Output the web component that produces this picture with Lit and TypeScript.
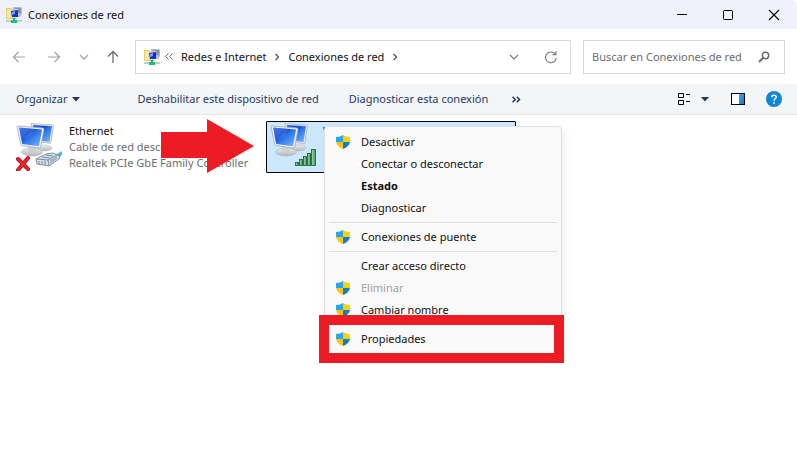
import { LitElement, html, svg, css, nothing } from "lit";
import { customElement } from "lit/decorators.js";
import { classMap } from "lit/directives/class-map.js";

interface MenuEntry {
  label: string;
  shield?: boolean;
  bold?: boolean;
  disabled?: boolean;
  marked?: boolean;
}

const MENU: MenuEntry[][] = [
  [
    { label: "Desactivar", shield: true },
    { label: "Conectar o desconectar" },
    { label: "Estado", bold: true },
    { label: "Diagnosticar" },
  ],
  [{ label: "Conexiones de puente", shield: true }],
  [
    { label: "Crear acceso directo" },
    { label: "Eliminar", shield: true, disabled: true },
    { label: "Cambiar nombre", shield: true },
  ],
  [{ label: "Propiedades", shield: true, marked: true }],
];

const networkFolder = html`<svg width="16" height="16" viewBox="0 0 16 16" aria-hidden="true">
  <path d="M0 1h5l1 1h3v10H0z" fill="#e9cf62" />
  <path d="M1 2h4v9H1z" fill="#fbeb9c" />
  <path d="M7 0h8l1 1v6l-2 3H7z" fill="#b3bac6" />
  <path d="M9 1h6v5H9z" fill="#8793b4" />
  <path d="M4 3l8-1v8l-7 1z" fill="#d5dae4" />
  <path d="M5 4l7-1v7l-6 0z" fill="#1a2fc0" />
  <path d="M6 5l3-1v3l-3 1z" fill="#6fa0f4" />
  <path d="M6 11h5l-1 1H7z" fill="#98a0a8" />
  <path d="M0 13h16v2H0z" fill="#c3caca" />
  <path d="M7 11h2v2h2v3H5v-3h2z" fill="#18c274" />
</svg>`;

const shieldIcon = html`<svg width="14" height="14" viewBox="0 0 14 14" aria-hidden="true">
  <path d="M7 0Q4.500 2 0 2V7H7z" fill="#29a5ea" />
  <path d="M7 0Q9.500 2 14 2V7H7z" fill="#fdd000" />
  <path d="M0 7H7V14Q.8 11.500 0 7z" fill="#f9c412" />
  <path d="M14 7H7V14Q13.200 11.500 14 7z" fill="#117bd0" />
</svg>`;

const computers = svg`
  <defs>
    <linearGradient id="scr" x1="0" y1="0" x2="1" y2="1">
      <stop offset="0" stop-color="#2a6be8" />
      <stop offset=".35" stop-color="#1148d2" />
      <stop offset=".5" stop-color="#2a73ea" />
      <stop offset="1" stop-color="#7dbcfb" />
    </linearGradient>
    <linearGradient id="base" x1="0" y1="0" x2="0" y2="1">
      <stop offset="0" stop-color="#eceeef" />
      <stop offset="1" stop-color="#b2b6ba" />
    </linearGradient>
  </defs>
  <ellipse cx="28" cy="24" rx="7" ry="3" fill="url(#base)" stroke="#b0b4b8" stroke-width=".4" />
  <path d="M14-.5L35.500 1q1 .2 1 1L34 18.500q-.3 1-1 1L18 17z" fill="#e6e8ea" stroke="#a9adb2" stroke-width=".7" />
  <path d="M16 1l19 1.300-2.500 15.700L18 16z" fill="url(#scr)" />
  <ellipse cx="15" cy="28" rx="10.500" ry="4" fill="url(#base)" stroke="#a8acb0" stroke-width=".5" />
  <path d="M11 22l8 1v5q-4 2-8-1z" fill="#cdd0d3" />
  <path d="M1 2l25 2q1.200.2 1 1.200L23.800 23q-.3 1.200-1.500 1L5 21.500q-1-.2-1.200-1.200L0 3q0-1 1-1z" fill="#f1f2f3" stroke="#a4a8ad" stroke-width=".8" />
  <path d="M2 3.600l23 1.900L22 22.300 5.200 19.900z" fill="url(#scr)" />
  <path d="M2 3.600l15 1.300Q15 14 4.300 15.600z" fill="#fff" opacity=".12" />`;

const ethernetIcon = html`<svg width="48" height="48" viewBox="0 0 48 48" aria-hidden="true">
  <g transform="translate(1 1)">${computers}</g>
  <path d="M36 34l10-6v4l-7 5z" fill="#49b9df" />
  <path d="M20 36l10-5 7-1 7 3-1 3-10 7-12-2z" fill="#d7dfe7" stroke="#68788a" stroke-width=".8" />
  <path d="M20 36l12 1 9-5M32 37l1 6M23 38v3M26 38v3M29 38v4M26 34l8 1M30 32l7 1" fill="none" stroke="#73859a" stroke-width=".9" />
  <path d="M34 37l7-4v3l-7 5z" fill="#9eb5ce" />
  <path d="M2 36l10 10M12 35L2 47" stroke="#9e1015" stroke-width="4" stroke-linecap="round" />
  <path d="M2 36l10 10M12 35L2 47" stroke="#e9252b" stroke-width="2.600" stroke-linecap="round" />
</svg>`;

const wifiIcon = html`<svg width="48" height="48" viewBox="0 0 48 48" aria-hidden="true">
  <defs>
    <linearGradient id="bar" x1="0" y1="0" x2="1" y2="0">
      <stop offset="0" stop-color="#a9dab0" />
      <stop offset="1" stop-color="#3c965c" />
    </linearGradient>
  </defs>
  <g transform="translate(1 1)">${computers}</g>
  <g fill="url(#bar)" stroke="#1d6b3c" stroke-width=".9">
    <rect x="25.500" y="39.500" width="3" height="3" />
    <rect x="29.500" y="36.500" width="3" height="6" />
    <rect x="33.500" y="33.500" width="3" height="9" />
    <rect x="37.500" y="30.500" width="3" height="12" />
    <rect x="41.500" y="26.500" width="4" height="16" />
  </g>
</svg>`;

const caret = html`<svg width="8" height="5" viewBox="0 0 8 5" aria-hidden="true">
  <path d="M0 0h8L4 4.600z" fill="#1d3a66" />
</svg>`;

const chevronRight = html`<svg width="6" height="8" viewBox="0 0 6 8" aria-hidden="true">
  <path d="M1.500 1l3 3-3 3" fill="none" stroke="#555" stroke-width="1.300" />
</svg>`;

@customElement("app-root")
export class AppRoot extends LitElement {
  static styles = css`
    :host {
      display: flex;
      flex-direction: column;
      min-height: 100vh;
      background: #fff;
      color: #111;
      font: 11px/16px "Noto Sans", "Open Sans", sans-serif;
    }
    * {
      box-sizing: border-box;
    }
    button {
      font: inherit;
      color: inherit;
      background: none;
      border: 0;
      padding: 0;
      margin: 0;
      display: flex;
      align-items: center;
      white-space: nowrap;
    }
    svg {
      display: block;
      flex: none;
    }
    .titlebar {
      display: flex;
      align-items: center;
      height: 29px;
      padding-left: 6px;
      background: #eff2fa;
      border-top-right-radius: 6px;
    }
    .titlebar h1 {
      flex: 1;
      margin: 0 0 0 6px;
      font: inherit;
    }
    .titlebar button {
      width: 46px;
      height: 28px;
      justify-content: center;
    }
    .navrow {
      display: flex;
      align-items: center;
      height: 55px;
      padding: 0 12px;
    }
    .history {
      display: flex;
      width: 123px;
    }
    .history button {
      width: 14px;
      height: 16px;
      justify-content: center;
    }
    .history button + button {
      margin-left: 21px;
    }
    .history button + .recent {
      margin-left: 16px;
    }
    .history button + .up {
      margin-left: 15px;
    }
    .address {
      flex: 1;
      display: flex;
      align-items: center;
      height: 34px;
      padding: 0 12px 0 8px;
      border: 1px solid #d9d9d9;
    }
    .crumbs {
      flex: 1;
      display: flex;
      align-items: center;
      margin-left: 5px;
    }
    .crumbs a {
      color: inherit;
      text-decoration: none;
      white-space: nowrap;
      margin: 0 8px;
    }
    .address button + button {
      margin-left: 25px;
    }
    .search {
      display: flex;
      align-items: center;
      width: 202px;
      height: 34px;
      margin-left: 12px;
      padding: 0 14px 0 8px;
      border: 1px solid #d9d9d9;
    }
    .search input {
      flex: 1;
      min-width: 0;
      padding: 0;
      border: 0;
      outline: 0;
      background: none;
      font: inherit;
    }
    .search input::placeholder {
      color: #6b6b6b;
      opacity: 1;
    }
    .toolbar {
      display: flex;
      align-items: center;
      height: 31px;
      padding: 0 15px 0 16px;
      background: #f4f5f7;
      border-bottom: 1px solid #e5e7e9;
      color: #1d3a66;
    }
    .organize {
      gap: 5px;
      margin-right: 57px;
    }
    .disable {
      margin-right: 30px;
    }
    .diagnose {
      margin-right: 24px;
    }
    .tools {
      display: flex;
      align-items: center;
      margin-left: auto;
    }
    .view {
      gap: 10px;
      margin-right: 22px;
    }
    .pane {
      margin-right: 21px;
    }
    .content {
      position: relative;
      flex: 1;
      padding: 6px 12px;
    }
    .tiles {
      display: grid;
      grid-template-columns: repeat(auto-fill, 250px);
      gap: 4px;
    }
    .tile {
      display: flex;
      gap: 5px;
      height: 52px;
      padding: 1px 3px;
      border: 1px solid transparent;
      color: #6d6d6d;
      white-space: nowrap;
    }
    .tile p {
      margin: 0;
    }
    .tile .name {
      color: #111;
    }
    .tile.selected {
      background: #cce8ff;
      border-color: #000;
      border-radius: 1px;
    }
    .pointer {
      position: absolute;
      left: 161px;
      top: 4px;
    }
    .menu {
      position: absolute;
      left: 324px;
      top: 11px;
      width: 238px;
      padding: 4px 0;
      background: #f9f9f9;
      border: 1px solid #e0e0e0;
      border-radius: 4px;
      box-shadow: 2px 4px 10px rgba(0, 0, 0, 0.08);
    }
    .menu hr {
      height: 1px;
      margin: 3px 4px;
      border: 0;
      background: #e0e0e0;
    }
    .item {
      position: relative;
      width: 100%;
      height: 22px;
      padding-left: 11px;
    }
    .glyph {
      width: 25px;
    }
    .bold {
      font-weight: 700;
    }
    .item:disabled {
      color: #a0a0a0;
    }
    .marked::after {
      content: "";
      position: absolute;
      inset: -13px -3px -13px -6px;
      border: 10px solid #ed1c24;
    }
  `;

  private renderItem(entry: MenuEntry) {
    return html`<button
      class=${classMap({ item: true, bold: !!entry.bold, marked: !!entry.marked })}
      role="menuitem"
      ?disabled=${entry.disabled}
    >
      <span class="glyph">${entry.shield ? shieldIcon : nothing}</span>${entry.label}
    </button>`;
  }

  render() {
    return html`
      <header class="titlebar">
        ${networkFolder}
        <h1>Conexiones de red</h1>
        <button aria-label="Minimizar">
          <svg width="12" height="12" viewBox="0 0 12 12"><path d="M1 5.500h10" stroke="#000" /></svg>
        </button>
        <button aria-label="Maximizar">
          <svg width="12" height="12" viewBox="0 0 12 12">
            <rect x="1.500" y="1.500" width="9" height="9" rx="1" fill="none" stroke="#000" />
          </svg>
        </button>
        <button aria-label="Cerrar">
          <svg width="12" height="12" viewBox="0 0 12 12"><path d="M1 1l10 10M11 1L1 11" stroke="#000" stroke-width="1.100" /></svg>
        </button>
      </header>

      <div class="navrow">
        <div class="history">
          <button aria-label="Atrás">
            <svg width="14" height="12" viewBox="0 0 14 12"><path d="M13 6H1.500M6.500 1l-5 5 5 5" fill="none" stroke="#a3a3a3" stroke-width="1.200" /></svg>
          </button>
          <button aria-label="Adelante">
            <svg width="14" height="12" viewBox="0 0 14 12"><path d="M1 6h11.500M7.500 1l5 5-5 5" fill="none" stroke="#a3a3a3" stroke-width="1.200" /></svg>
          </button>
          <button class="recent" aria-label="Ubicaciones recientes">
            <svg width="10" height="6" viewBox="0 0 10 6"><path d="M1 1l4 4 4-4" fill="none" stroke="#a3a3a3" stroke-width="1.300" /></svg>
          </button>
          <button class="up" aria-label="Subir">
            <svg width="12" height="14" viewBox="0 0 12 14"><path d="M6 13V1.500M1 6.500l5-5 5 5" fill="none" stroke="#6b6b6b" stroke-width="1.300" /></svg>
          </button>
        </div>
        <div class="address">
          ${networkFolder}
          <nav class="crumbs">
            <svg width="8" height="7" viewBox="0 0 8 7" aria-hidden="true"><path d="M3.500.5l-3 3 3 3M7.500.5l-3 3 3 3" fill="none" stroke="#666" /></svg>
            <a href="#redes">Redes e Internet</a>${chevronRight}
            <a href="#conexiones">Conexiones de red</a>${chevronRight}
          </nav>
          <button aria-label="Mostrar ubicaciones anteriores">
            <svg width="10" height="6" viewBox="0 0 10 6"><path d="M1 1l4 4 4-4" fill="none" stroke="#777" stroke-width="1.100" /></svg>
          </button>
          <button aria-label="Actualizar">
            <svg width="14" height="14" viewBox="0 0 14 14">
              <path d="M12.300 8A5.400 5.400 0 1 1 11.500 4.500M12 1v3.800H8.300" fill="none" stroke="#777" stroke-width="1.100" />
            </svg>
          </button>
        </div>
        <label class="search">
          <input type="text" placeholder="Buscar en Conexiones de red" aria-label="Buscar en Conexiones de red" />
          <svg width="12" height="12" viewBox="0 0 12 12" aria-hidden="true">
            <circle cx="7.500" cy="4.500" r="3.200" fill="none" stroke="#6b6b6b" stroke-width="1.500" />
            <path d="M5.200 6.800L1 11" stroke="#6b6b6b" stroke-width="2" />
          </svg>
        </label>
      </div>

      <div class="toolbar">
        <button class="organize">Organizar ${caret}</button>
        <button class="disable">Deshabilitar este dispositivo de red</button>
        <button class="diagnose">Diagnosticar esta conexión</button>
        <button aria-label="Más comandos">
          <svg width="9" height="7" viewBox="0 0 9 7"><path d="M.5.8l2.700 2.700L.5 6.200M4.800.8l2.700 2.700-2.700 2.700" fill="none" stroke="#1d3a66" stroke-width="1.500" /></svg>
        </button>
        <div class="tools">
          <button class="view" aria-label="Cambiar la vista">
            <svg width="14" height="14" viewBox="0 0 14 14">
              <path d="M1.500 1.500h5v4h-5zM1.500 8.500h5v4h-5zM9 2.500h4M9 9.500h4" fill="none" stroke="#000" />
            </svg>
            ${caret}
          </button>
          <button class="pane" aria-label="Panel de vista previa">
            <svg width="14" height="12" viewBox="0 0 14 12">
              <defs>
                <linearGradient id="pane" x1="0" y1="0" x2="1" y2="1">
                  <stop offset="0" stop-color="#33b0f0" />
                  <stop offset="1" stop-color="#0c78cc" />
                </linearGradient>
              </defs>
              <rect x=".5" y=".5" width="13" height="11" fill="#fff" stroke="#000" />
              <rect x="8" y="1" width="5" height="10" fill="url(#pane)" />
            </svg>
          </button>
          <button aria-label="Ayuda">
            <svg width="16" height="16" viewBox="0 0 16 16">
              <circle cx="8" cy="8" r="8" fill="#0f86d8" />
              <path d="M5.800 6.200C5.800 3.600 10.200 3.600 10.200 6.100 10.200 7.700 8 7.800 8 9.700M8 11v1.700" fill="none" stroke="#fff" stroke-width="1.500" />
            </svg>
          </button>
        </div>
      </div>

      <main class="content">
        <div class="tiles">
          <div class="tile">
            ${ethernetIcon}
            <div>
              <p class="name">Ethernet</p>
              <p>Cable de red desconectado</p>
              <p>Realtek PCIe GbE Family Controller</p>
            </div>
          </div>
          <div class="tile selected">
            ${wifiIcon}
            <div><p class="name">Wi-Fi</p></div>
          </div>
        </div>
        <svg class="pointer" width="93" height="54" viewBox="0 0 93 54" aria-hidden="true">
          <path d="M0 13h46V0l47 27-47 27V39H0z" fill="#ed1c24" />
        </svg>
        <div class="menu" role="menu">
          ${MENU.map(
            (group, i) => html`${i ? html`<hr />` : nothing}${group.map((e) => this.renderItem(e))}`,
          )}
        </div>
      </main>
    `;
  }
}
